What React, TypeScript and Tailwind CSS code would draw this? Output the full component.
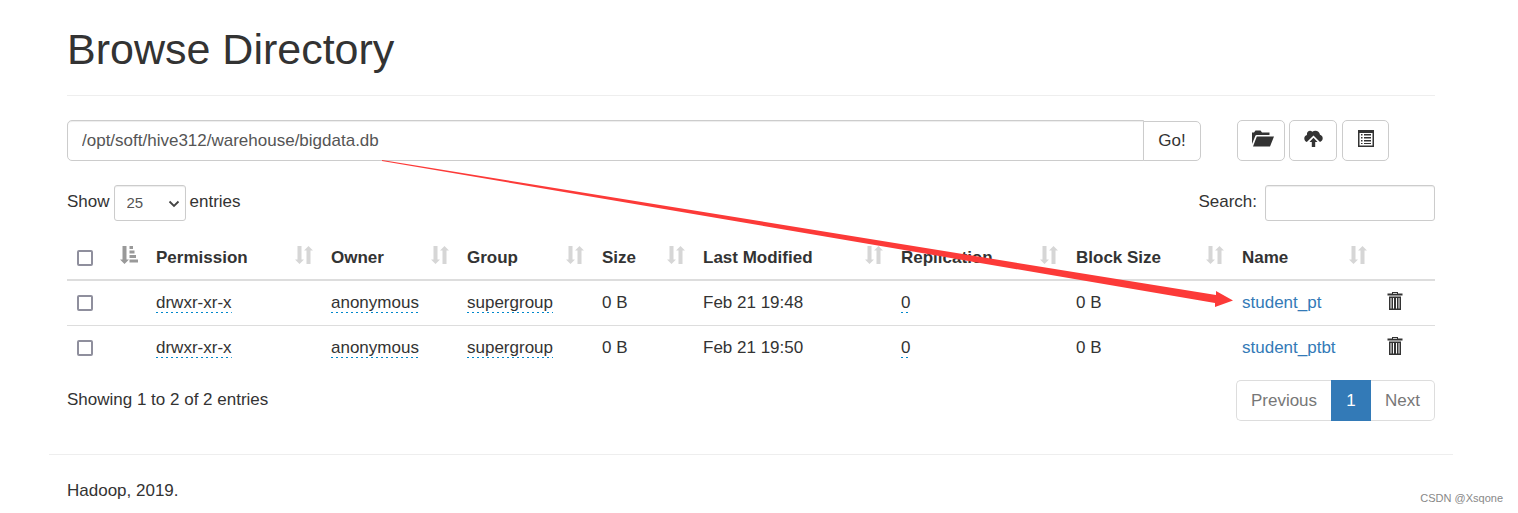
import React from "react";

const columns = [
  { label: "Permission", width: "w-[175px]" },
  { label: "Owner", width: "w-[136px]" },
  { label: "Group", width: "w-[135px]" },
  { label: "Size", width: "w-[101px]" },
  { label: "Last Modified", width: "w-[198px]" },
  { label: "Replication", width: "w-[175px]" },
  { label: "Block Size", width: "w-[166px]" },
  { label: "Name", width: "w-[143px]" },
];

const rows = [
  { modified: "Feb 21 19:48", name: "student_pt" },
  { modified: "Feb 21 19:50", name: "student_ptbt" },
];

function SortBoth() {
  return (
    <svg className="h-[18px] w-[18px] shrink-0 fill-[#d6d6d6]" viewBox="0 0 18 18" aria-hidden="true">
      <path d="M2.500 0h4v13.500H9L4.500 18 0 13.500h2.500zM11.500 18V4.500H9L13.500 0 18 4.500h-2.500V18z" />
    </svg>
  );
}

function SortActive() {
  return (
    <svg className="h-[18px] w-[18px] shrink-0 fill-[#999]" viewBox="0 0 18 18" aria-hidden="true">
      <path d="M2.500 0h4v13.500H9L4.500 18 0 13.500h2.500zM9.500 0h3.500v3H9.500zM9.500 4.500h5v3h-5zM9.500 9H16v3H9.500zM9.500 13.500H18v3H9.500z" />
    </svg>
  );
}

function Trash() {
  return (
    <svg className="h-[18px] w-4" viewBox="0 0 16 18" aria-hidden="true">
      <path fill="#333" fillRule="evenodd" d="M5 0h6v1.500h4.500V3.500H.5V1.500H5zM6 1v.7h4V1zM2 4.500h12V18H2zM3.500 6v10.500h1V6zM6 6v10.500h1V6zM9 6v10.500h1V6zM11.500 6v10.500h1V6z" />
    </svg>
  );
}

function FolderOpen() {
  return (
    <svg className="h-[17px] w-[22px] fill-[#333]" viewBox="0 0 22 17" aria-hidden="true">
      <path d="M0 14V2.500h2L3.500.5h5L10 2.500h7.500V5H4.500L3.500 5.500z" />
      <path d="M4.800 6.500H22l-4 10H1z" />
    </svg>
  );
}

function CloudUpload() {
  return (
    <svg className="h-[17px] w-[19px] fill-[#333]" viewBox="0 0 19 17" aria-hidden="true">
      <path d="M2.800 12 9.500 5.500 16 12c1.800-.6 2.800-1.900 2.700-3.900-.1-1.700-1.200-2.900-2.700-3.300C15.500 2.200 13.700.8 11.400.8c-1.200 0-2.200.4-3 1C5.700-.5 2.300 1.700 3 5 1.200 5.500.2 6.800.3 8.500c.1 1.800 1 3 2.500 3.500z" />
      <path d="M9.500 7.800 13.500 12h-2.300v5H7.800v-5H5.500z" />
    </svg>
  );
}

function ListIcon() {
  return (
    <svg className="h-[17px] w-4 fill-[#333]" viewBox="0 0 16 17" aria-hidden="true">
      <path fillRule="evenodd" d="M0 0h16v17H0zM1.500 3v12.500h13V3z" />
      <path d="M3 4h1.500v1.500H3zM6 4h7v1.500H6zM3 7h1.500v1.500H3zM6 7h7v1.500H6zM3 10h1.500v1.500H3zM6 10h7v1.500H6zM3 13h1.500v1H3zM6 13h7v1H6z" />
    </svg>
  );
}

const box = "m-0 block h-4 w-4 appearance-none rounded-[2px] border-2 border-[#8f8f9d] bg-white checked:bg-[#337ab7]";
const editable =
  "inline-block bg-[repeating-linear-gradient(90deg,#0088cc_0_2px,transparent_2px_5px)] bg-[length:100%_1px] bg-bottom bg-no-repeat leading-5";
const iconButton = "flex h-[41px] items-center justify-center rounded-[5px] border border-[#ccc] bg-white pb-1";

export default function App() {
  return (
    <div className="relative bg-white pr-[65px] pb-3 pl-[49px] font-['Liberation_Sans',Arial,sans-serif] text-[17px] leading-6 text-[#333]">
      <main className="px-[18px]">
        <header className="border-b border-[#eee] pt-6 pb-[21px]">
          <h1 className="text-[43px] leading-[50px]">Browse Directory</h1>
        </header>

        <div className="mt-6 flex">
          <form className="flex min-w-0 flex-1 items-end" onSubmit={(e) => e.preventDefault()}>
            <input
              type="text"
              aria-label="Directory path"
              defaultValue="/opt/soft/hive312/warehouse/bigdata.db"
              className="h-[41px] min-w-0 flex-1 rounded-l-[5px] border border-[#ccc] px-[14px] text-[#555] shadow-[inset_0_1px_1px_rgba(0,0,0,0.075)] outline-none"
            />
            <button type="submit" className="-ml-px h-10 w-[58px] rounded-r-[5px] border border-[#ccc] bg-white">
              Go!
            </button>
          </form>
          <div className="mr-[46px] ml-9 flex gap-1">
            <button type="button" aria-label="Create directory" className={`${iconButton} w-12 pl-1`}>
              <FolderOpen />
            </button>
            <button type="button" aria-label="Upload files" className={`${iconButton} w-12`}>
              <CloudUpload />
            </button>
            <button type="button" aria-label="Cut and paste" className={`${iconButton} ml-px w-[47px]`}>
              <ListIcon />
            </button>
          </div>
        </div>

        <div className="mt-6 flex justify-between">
          <div className="flex gap-1">
            <label htmlFor="length" className="pt-[5px]">Show</label>
            <div className="relative">
              <select
                id="length"
                defaultValue="25"
                className="h-9 w-[72px] appearance-none rounded-[3px] border border-[#ccc] bg-white pl-3 text-[15px] text-[#555] shadow-[inset_0_1px_1px_rgba(0,0,0,0.075)]"
              >
                <option>25</option>
                <option>50</option>
                <option>100</option>
              </select>
              <svg className="pointer-events-none absolute top-[15px] right-[6px] h-2 w-3" viewBox="0 0 12 8" aria-hidden="true">
                <path d="M1.500 1.500 6 6l4.500-4.500" fill="none" stroke="#444" strokeWidth="1.800" />
              </svg>
            </div>
            <span className="pt-[5px]">entries</span>
          </div>
          <div className="flex gap-2">
            <label htmlFor="search" className="pt-[5px]">Search:</label>
            <input
              id="search"
              type="search"
              className="h-9 w-[170px] rounded-[3px] border border-[#ccc] px-3 text-[15px] shadow-[inset_0_1px_1px_rgba(0,0,0,0.075)]"
            />
          </div>
        </div>

        <table className="mt-3 w-full table-fixed border-collapse text-left">
          <thead>
            <tr className="h-[47px] border-b-2 border-[#ddd]">
              <th className="w-[79px] pt-[3px] pr-2 pl-[10px]">
                <div className="flex h-6 items-start justify-between">
                  <input type="checkbox" aria-label="Select all" className={`${box} mt-1`} />
                  <SortActive />
                </div>
              </th>
              {columns.map((c) => (
                <th key={c.label} className={`${c.width} pt-[3px] pr-2 pl-[10px] font-bold`}>
                  <div className="flex items-start justify-between whitespace-nowrap">
                    {c.label}
                    <SortBoth />
                  </div>
                </th>
              ))}
              <th className="w-[60px]" aria-label="Delete" />
            </tr>
          </thead>
          <tbody>
            {rows.map((r) => (
              <tr key={r.name} className="h-[45px] border-b border-[#ddd] last:border-b-0">
                <td className="pl-[10px]">
                  <input type="checkbox" aria-label={`Select ${r.name}`} className={box} />
                </td>
                <td className="pl-[10px]"><span className={editable}>drwxr-xr-x</span></td>
                <td className="pl-[10px]"><span className={editable}>anonymous</span></td>
                <td className="pl-[10px]"><span className={editable}>supergroup</span></td>
                <td className="pl-[10px]">0 B</td>
                <td className="pl-[10px]">{r.modified}</td>
                <td className="pl-[10px]"><span className={editable}>0</span></td>
                <td className="pl-[10px]">0 B</td>
                <td className="pl-[10px]"><a href="#" className="text-[#337ab7]">{r.name}</a></td>
                <td className="pb-1 pl-3">
                  <button type="button" aria-label={`Delete ${r.name}`} className="block"><Trash /></button>
                </td>
              </tr>
            ))}
          </tbody>
        </table>

        <div className="mt-[10px] flex justify-between">
          <p className="pt-2">Showing 1 to 2 of 2 entries</p>
          <nav aria-label="Pages" className="flex h-[41px] text-[#777]">
            <button type="button" className="w-[95px] rounded-l-[5px] border border-r-0 border-[#ddd]">Previous</button>
            <button type="button" className="w-10 bg-[#337ab7] text-white">1</button>
            <button type="button" className="w-16 rounded-r-[5px] border border-l-0 border-[#ddd]">Next</button>
          </nav>
        </div>
      </main>

      <hr className="mt-[33px] border-[#eee]" />
      <footer className="px-[18px] pt-6">
        <p>Hadoop, 2019.</p>
      </footer>

      <p className="absolute right-[15px] bottom-[9px] text-[11px] leading-4 text-[#888]">CSDN @Xsqone</p>
      <svg className="pointer-events-none absolute top-[160px] left-[382px] h-[148px] w-[852px] fill-[#fc3a38]" viewBox="0 0 852 148" aria-hidden="true">
        <path d="M0 0 834 135V131L851 140.500 833 147V143L0 1z" />
      </svg>
    </div>
  );
}
